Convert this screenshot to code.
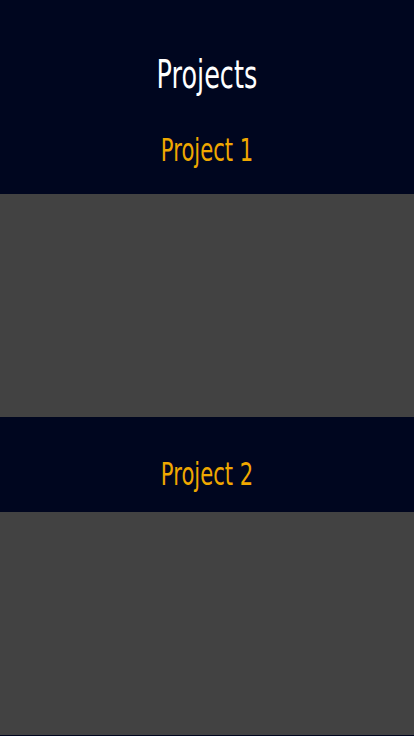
const projects = [
  { id: 1, title: "Project 1", head: "h-[82px] pt-[22px]" },
  { id: 2, title: "Project 2", head: "h-[95px] pt-[41px]" },
];

export default function App() {
  return (
    <div className="min-h-[736px] w-full bg-[#00061f] font-['DejaVu_Sans',sans-serif]">
      <header className="h-[112px] pt-[55px] text-center">
        <h1 className="inline-block scale-x-[0.655] text-[39px] leading-none text-white">Projects</h1>
      </header>

      {projects.map((p) => (
        <section key={p.id}>
          <div className={`${p.head} text-center`}>
            <h2 className="inline-block scale-x-[0.66] text-[32px] leading-none text-[#f0a800]">{p.title}</h2>
          </div>
          <div className="h-[223px] bg-[#424242]" />
        </section>
      ))}
    </div>
  );
}
